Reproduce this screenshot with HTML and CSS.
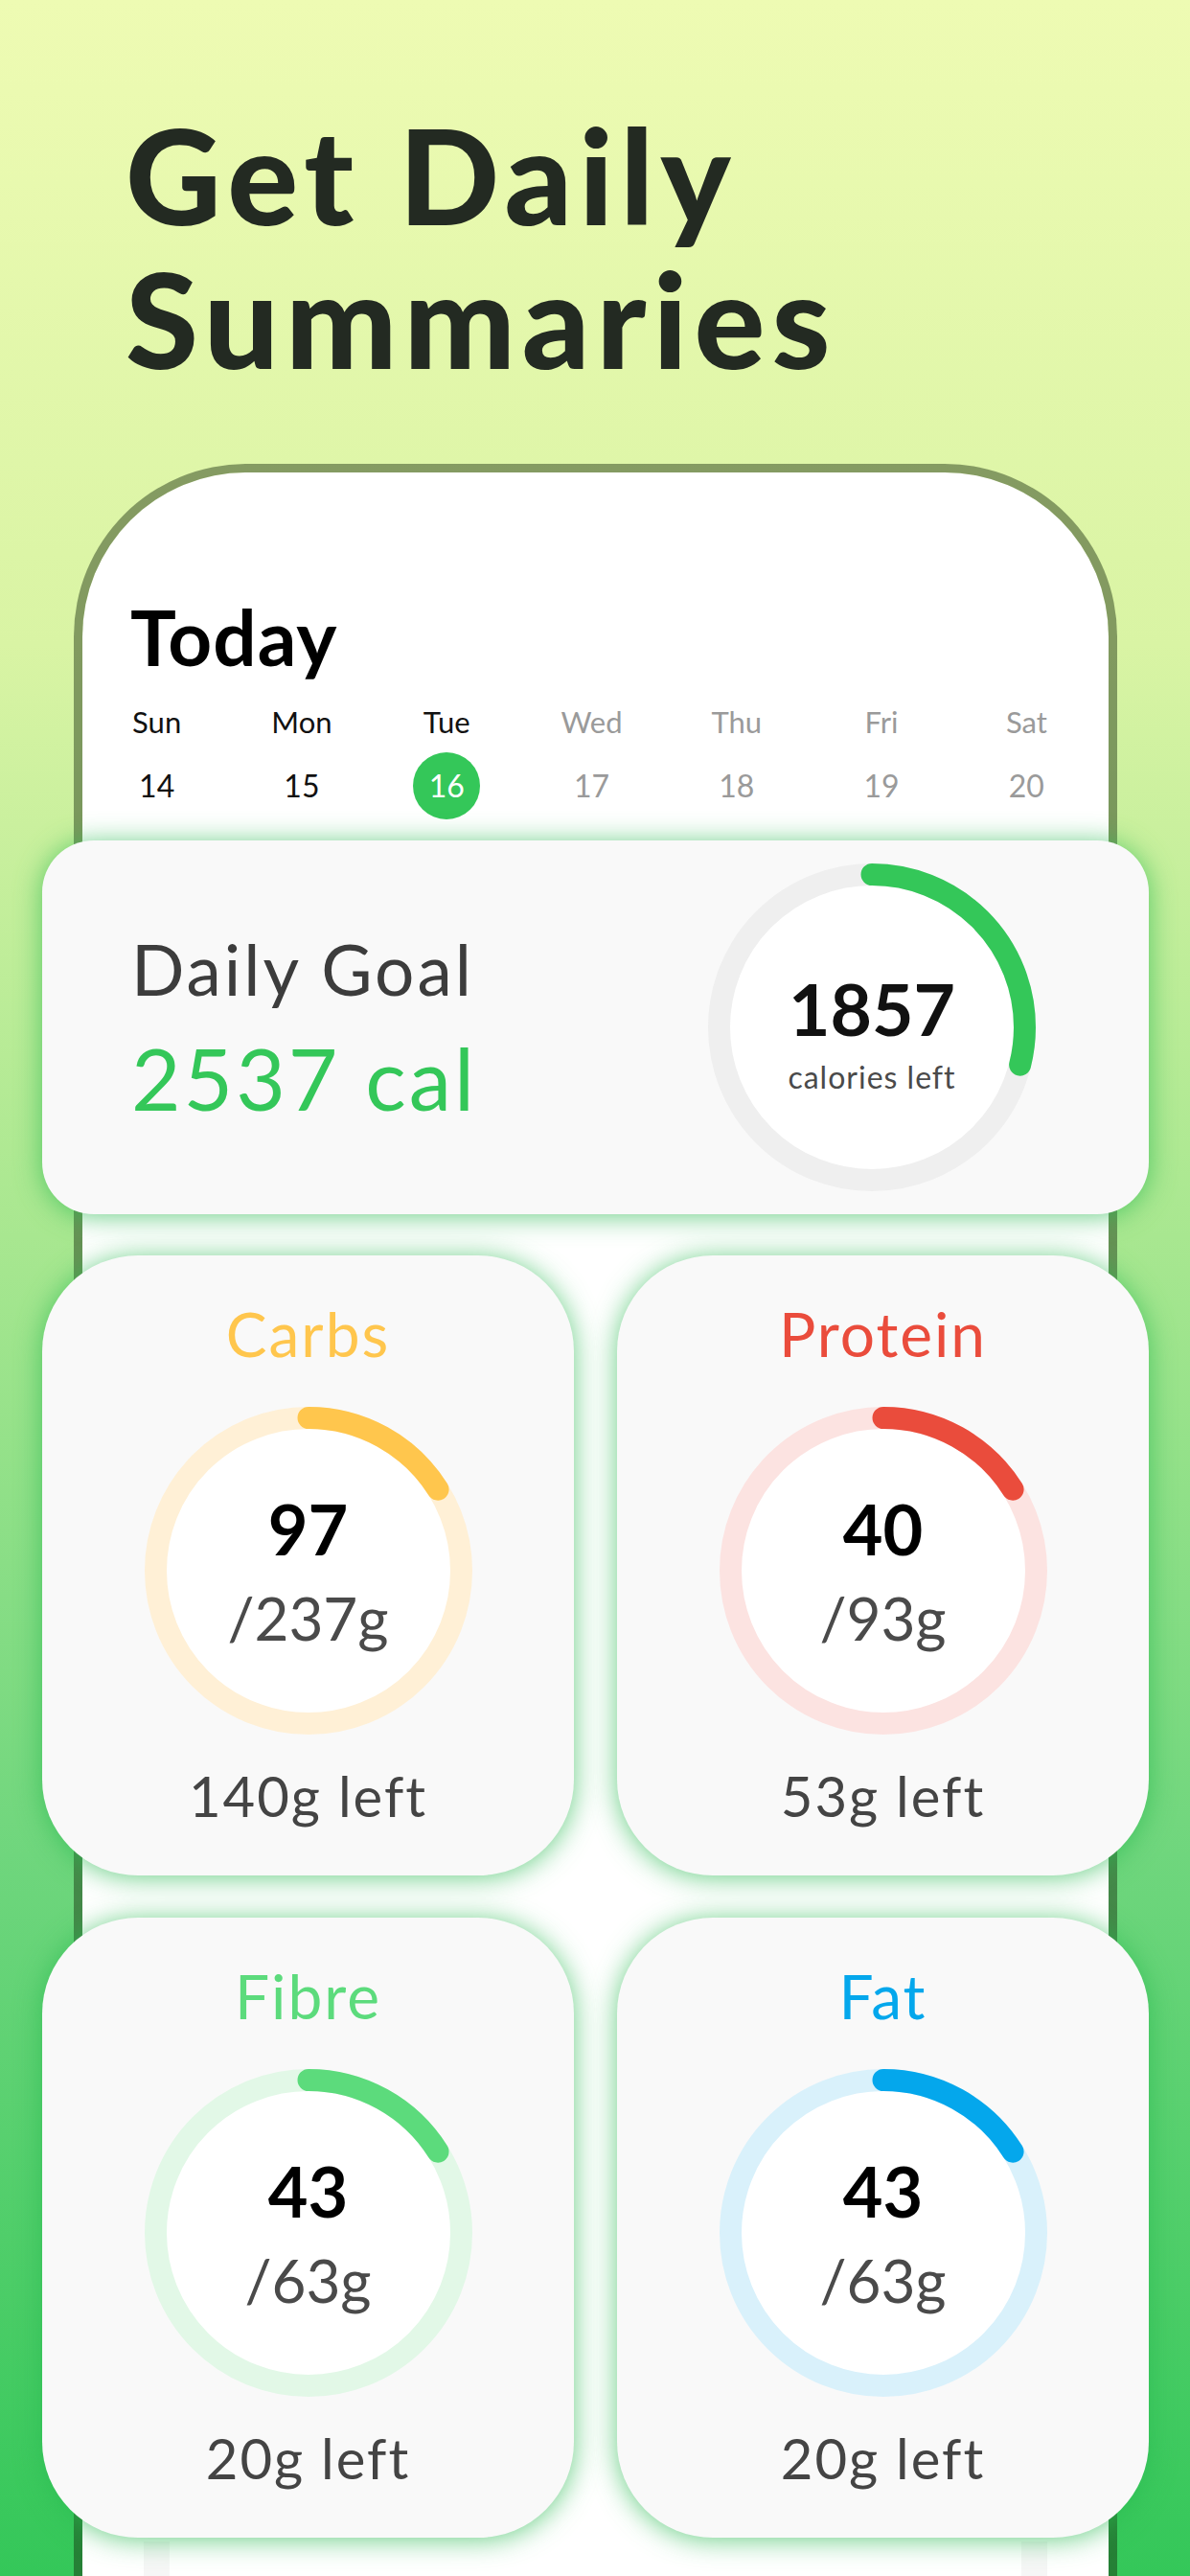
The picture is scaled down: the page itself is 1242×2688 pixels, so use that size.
FILE: index.html
```html
<!DOCTYPE html>
<html lang="en">
<head>
    <meta charset="UTF-8">
    <meta name="viewport" content="width=device-width, initial-scale=1.0">
    <title>Daily Summaries</title>
    <link rel="stylesheet" href="styles.css">
</head>
<body>
    <h1 class="headline">Get Daily<br>Summaries</h1>

    <div class="phone">
        <h2 class="today">Today</h2>

        <div class="week">
            <div class="day past"><span class="day-name">Sun</span><span class="day-num">14</span></div>
            <div class="day past"><span class="day-name">Mon</span><span class="day-num">15</span></div>
            <div class="day current"><span class="day-name">Tue</span><span class="day-num">16</span></div>
            <div class="day"><span class="day-name">Wed</span><span class="day-num">17</span></div>
            <div class="day"><span class="day-name">Thu</span><span class="day-num">18</span></div>
            <div class="day"><span class="day-name">Fri</span><span class="day-num">19</span></div>
            <div class="day"><span class="day-name">Sat</span><span class="day-num">20</span></div>
        </div>

        <div class="goal-card">
            <div class="goal-text">
                <p class="goal-label">Daily Goal</p>
                <p class="goal-value">2537 cal</p>
            </div>
            <div class="ring ring-goal">
                <svg class="ring-svg" viewBox="0 0 342 342">
                    <circle class="ring-track" cx="171" cy="171" r="159.5"/>
                    <circle class="ring-bar" cx="171" cy="171" r="159.5" stroke-dasharray="290 1100"/>
                </svg>
                <div class="ring-text goal-center">
                    <span class="goal-left">1857</span>
                    <span class="goal-caption">calories left</span>
                </div>
            </div>
        </div>

        <div class="macros">
            <div class="macro-card carbs">
                <p class="macro-name">Carbs</p>
                <div class="ring">
                    <svg class="ring-svg" viewBox="0 0 342 342">
                        <circle class="ring-track" cx="171" cy="171" r="159.5"/>
                        <circle class="ring-bar" cx="171" cy="171" r="159.5" stroke-dasharray="161 1100"/>
                    </svg>
                    <div class="ring-text">
                        <span class="macro-eaten">97</span>
                        <span class="macro-goal">/237g</span>
                    </div>
                </div>
                <p class="macro-left">140g left</p>
            </div>

            <div class="macro-card protein">
                <p class="macro-name">Protein</p>
                <div class="ring">
                    <svg class="ring-svg" viewBox="0 0 342 342">
                        <circle class="ring-track" cx="171" cy="171" r="159.5"/>
                        <circle class="ring-bar" cx="171" cy="171" r="159.5" stroke-dasharray="161 1100"/>
                    </svg>
                    <div class="ring-text">
                        <span class="macro-eaten">40</span>
                        <span class="macro-goal">/93g</span>
                    </div>
                </div>
                <p class="macro-left">53g left</p>
            </div>

            <div class="macro-card fibre">
                <p class="macro-name">Fibre</p>
                <div class="ring">
                    <svg class="ring-svg" viewBox="0 0 342 342">
                        <circle class="ring-track" cx="171" cy="171" r="159.5"/>
                        <circle class="ring-bar" cx="171" cy="171" r="159.5" stroke-dasharray="161 1100"/>
                    </svg>
                    <div class="ring-text">
                        <span class="macro-eaten">43</span>
                        <span class="macro-goal">/63g</span>
                    </div>
                </div>
                <p class="macro-left">20g left</p>
            </div>

            <div class="macro-card fat">
                <p class="macro-name">Fat</p>
                <div class="ring">
                    <svg class="ring-svg" viewBox="0 0 342 342">
                        <circle class="ring-track" cx="171" cy="171" r="159.5"/>
                        <circle class="ring-bar" cx="171" cy="171" r="159.5" stroke-dasharray="161 1100"/>
                    </svg>
                    <div class="ring-text">
                        <span class="macro-eaten">43</span>
                        <span class="macro-goal">/63g</span>
                    </div>
                </div>
                <p class="macro-left">20g left</p>
            </div>
        </div>

        <div class="peek-card"></div>
    </div>
</body>
</html>
```

FILE: styles.css
```css
html, body {
    margin: 0;
    padding: 0;
}

body {
    width: 1242px;
    height: 2688px;
    overflow: hidden;
    font-family: "Lato", "Noto Sans", sans-serif;
    background: linear-gradient(180deg, #eefbb3 0%, #d9f4a4 25%, #a8e790 48%, #6fd67d 72%, #34c759 100%);
}

.headline {
    margin: 0;
    padding: 107px 0 0 131px;
    font-size: 138px;
    line-height: 150px;
    font-weight: 900;
    letter-spacing: 7px;
    color: #232a22;
}

/* marco del telefono */
.phone {
    width: 1089px;
    min-height: 2400px;
    margin: 77px 0 0 77px;
    box-sizing: border-box;
    padding: 123px 0 0;
    background-color: #ffffff;
    background-clip: padding-box;
    border: 9px solid rgba(20, 40, 10, 0.44);
    border-bottom: none;
    border-radius: 180px 180px 0 0;
}

.today {
    margin: 0;
    padding-left: 50px;
    font-size: 80px;
    line-height: 96px;
    font-weight: 700;
    letter-spacing: 1px;
    color: #000000;
}

.week {
    display: grid;
    grid-template-columns: repeat(7, 1fr);
    margin-top: 21px;
    padding: 0 10px 0 2px;
}

.day {
    display: flex;
    flex-direction: column;
    align-items: center;
    gap: 12px;
    font-size: 31px;
    color: #9a9a9a;
}

.day.past, .day.current {
    color: #111111;
}

.day-name {
    line-height: 40px;
}

.day-num {
    width: 70px;
    height: 70px;
    line-height: 70px;
    font-size: 32px;
    text-align: center;
    border-radius: 50%;
}

.day.current .day-num {
    background-color: #34c759;
    color: #ffffff;
}

.goal-card, .macro-card {
    background-color: #f9f9f9;
    box-shadow: 0 2px 28px rgba(40, 185, 80, 0.7);
}

.goal-card {
    display: flex;
    justify-content: space-between;
    align-items: center;
    height: 390px;
    margin: 22px -42px 0;
    padding: 0 118px 0 93px;
    box-sizing: border-box;
    border-radius: 54px;
    position: relative;
}

.goal-text p {
    margin: 0;
}

.goal-label {
    font-size: 73px;
    line-height: 88px;
    letter-spacing: 3px;
    color: #3c3c3c;
}

.goal-value {
    margin-top: 17px !important;
    font-size: 89px;
    line-height: 106px;
    letter-spacing: 3px;
    color: #34c759;
}

.ring {
    position: relative;
    width: 342px;
    height: 342px;
    display: flex;
    flex-direction: column;
    align-items: center;
    justify-content: center;
}

.ring-svg {
    position: absolute;
    left: 0;
    top: 0;
    width: 342px;
    height: 342px;
    transform: rotate(-90deg);
}

.ring-track {
    fill: #ffffff;
    stroke: #efefef;
    stroke-width: 23;
}

.ring-bar {
    fill: none;
    stroke: #34c759;
    stroke-width: 23;
    stroke-linecap: round;
}

.ring-text {
    position: relative;
    display: flex;
    flex-direction: column;
    align-items: center;
}

.goal-center {
    padding-top: 12px;
}

.goal-left {
    font-size: 75px;
    line-height: 74px;
    font-weight: 700;
    color: #111111;
}

.goal-caption {
    margin-top: 17px;
    font-size: 32px;
    line-height: 36px;
    letter-spacing: 1px;
    color: #4a4a4a;
}

.macros {
    display: grid;
    grid-template-columns: 1fr 1fr;
    gap: 44px 45px;
    margin: 43px -42px 0;
    position: relative;
}

.macro-card {
    display: flex;
    flex-direction: column;
    align-items: center;
    height: 647px;
    box-sizing: border-box;
    padding-top: 45px;
    border-radius: 100px;
}

.macro-name {
    margin: 0;
    font-size: 64px;
    line-height: 74px;
    letter-spacing: 2px;
}

.macro-card .ring {
    margin-top: 39px;
}

.macro-eaten {
    font-size: 72px;
    line-height: 80px;
    font-weight: 700;
    color: #000000;
}

.macro-goal {
    margin-top: 18px;
    font-size: 62px;
    line-height: 70px;
    color: #4a4a4a;
}

.macro-left {
    margin: 29px 0 0;
    font-size: 58px;
    line-height: 70px;
    letter-spacing: 2px;
    color: #444444;
}

.carbs .macro-name { color: #ffc64d; }
.carbs .ring-track { stroke: #fff0d6; }
.carbs .ring-bar { stroke: #ffc64d; }

.protein .macro-name { color: #ea4c3c; }
.protein .ring-track { stroke: #fce3e1; }
.protein .ring-bar { stroke: #ea4c3c; }

.fibre .macro-name { color: #5cdb7c; }
.fibre .ring-track { stroke: #e2f8e7; }
.fibre .ring-bar { stroke: #5cdb7c; }

.fat .macro-name { color: #04a7ec; }
.fat .ring-track { stroke: #d9f1fb; }
.fat .ring-bar { stroke: #04a7ec; }

.peek-card {
    height: 120px;
    margin: 4px 64px 0;
    background-color: #ffffff;
    border-left: 27px solid #f6f6f6;
    border-right: 27px solid #f6f6f6;
}
```
